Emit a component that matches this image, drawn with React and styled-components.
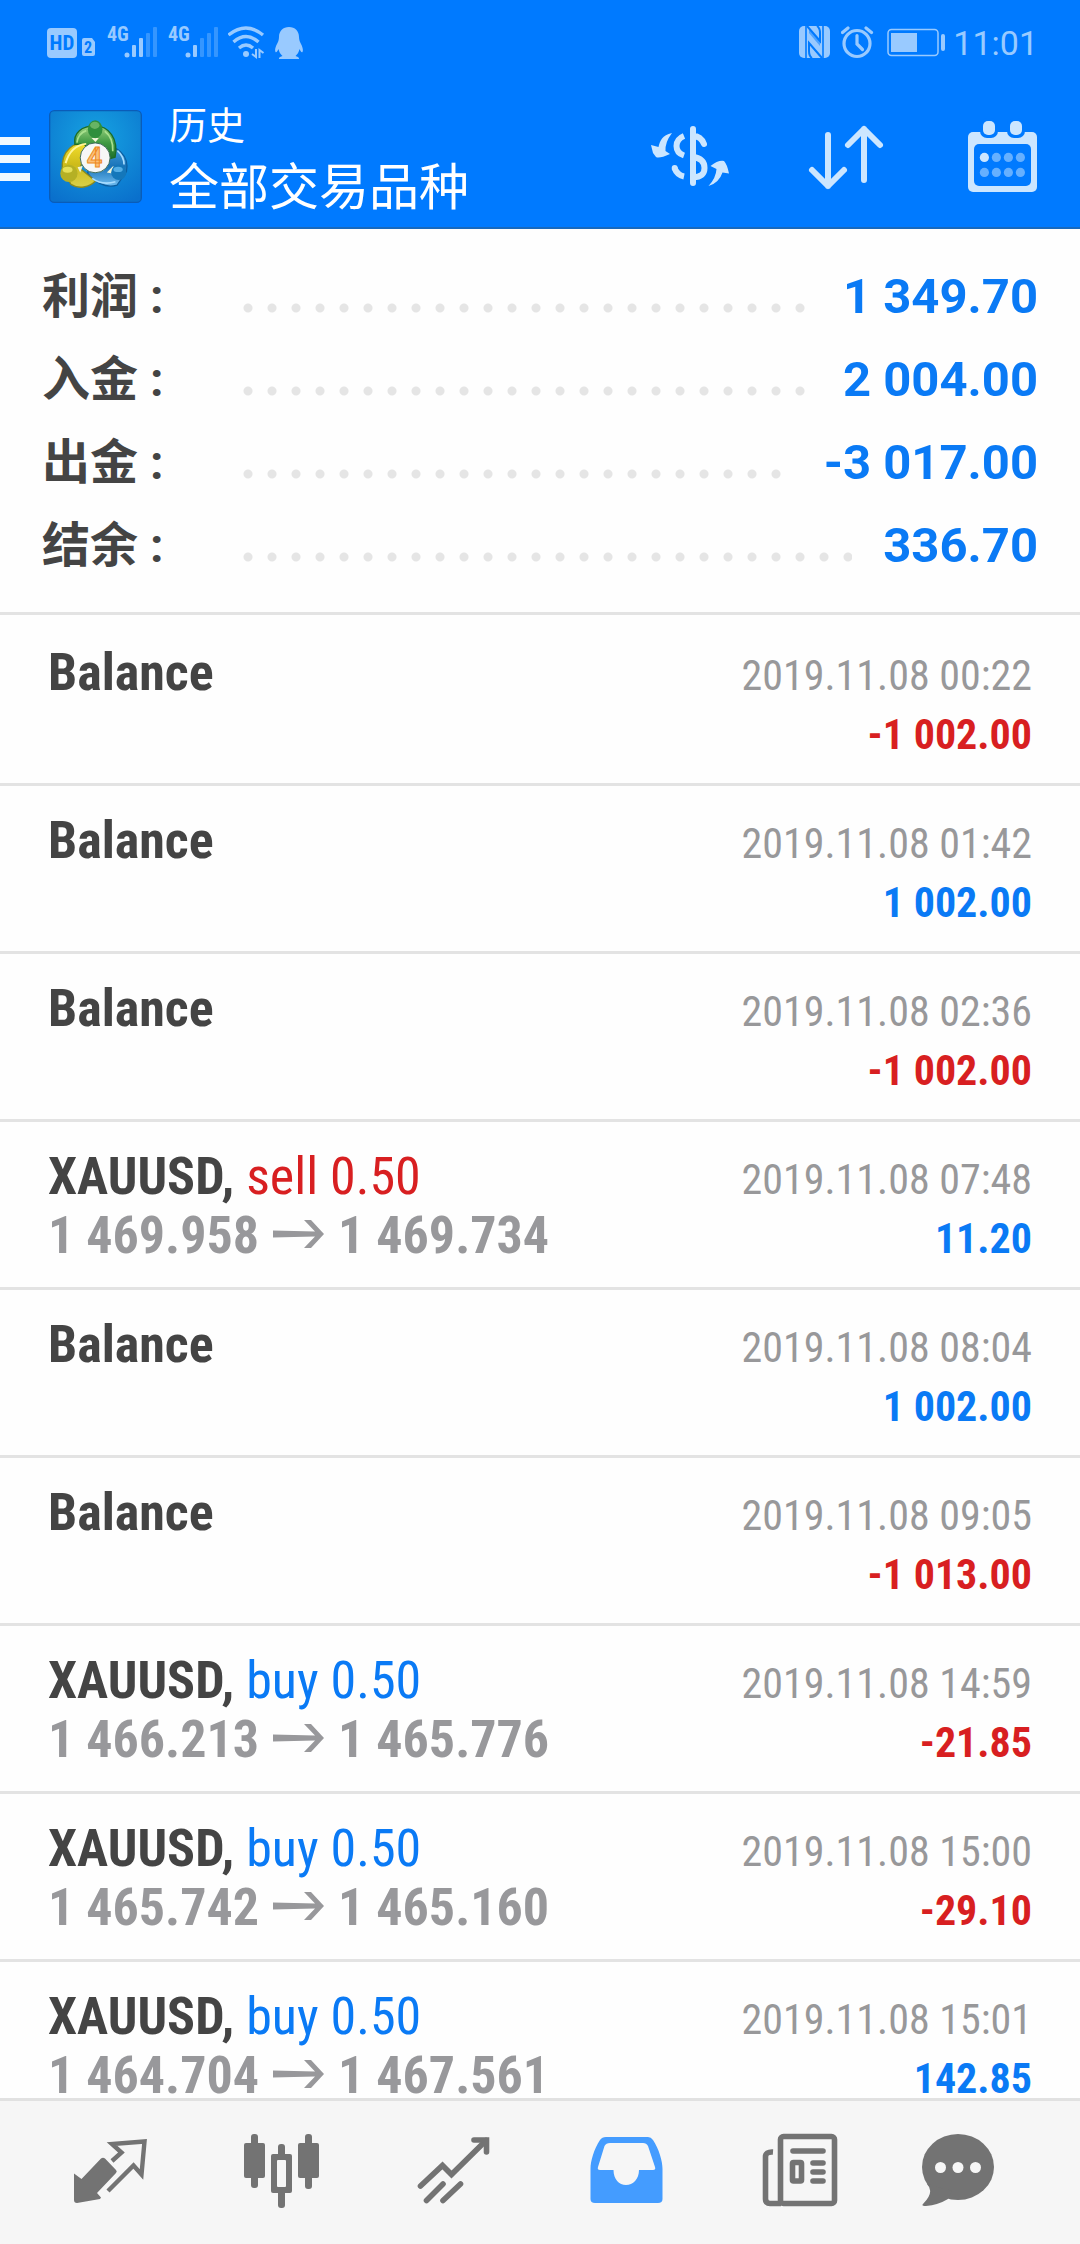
import React from 'react';
import styled, { createGlobalStyle } from 'styled-components';

const summary = [
    { label: '利润 :', value: '1 349.70' },
    { label: '入金 :', value: '2 004.00' },
    { label: '出金 :', value: '-3 017.00' },
    { label: '结余 :', value: '336.70' }
];

const deals = [
    { date: '2019.11.08 00:22', amount: '-1 002.00' },
    { date: '2019.11.08 01:42', amount: '1 002.00' },
    { date: '2019.11.08 02:36', amount: '-1 002.00' },
    { symbol: 'XAUUSD', side: 'sell', volume: '0.50', open: '1 469.958', close: '1 469.734', date: '2019.11.08 07:48', amount: '11.20' },
    { date: '2019.11.08 08:04', amount: '1 002.00' },
    { date: '2019.11.08 09:05', amount: '-1 013.00' },
    { symbol: 'XAUUSD', side: 'buy', volume: '0.50', open: '1 466.213', close: '1 465.776', date: '2019.11.08 14:59', amount: '-21.85' },
    { symbol: 'XAUUSD', side: 'buy', volume: '0.50', open: '1 465.742', close: '1 465.160', date: '2019.11.08 15:00', amount: '-29.10' },
    { symbol: 'XAUUSD', side: 'buy', volume: '0.50', open: '1 464.704', close: '1 467.561', date: '2019.11.08 15:01', amount: '142.85' }
];

export default function App() {
    return (
        <Screen>
            <GlobalStyle />

            <Header>
                <StatusBar />

                <Toolbar>
                    <MenuButton aria-label="菜单">
                        <MenuLine />
                        <MenuLine />
                        <MenuLine />
                    </MenuButton>

                    <Logo />

                    <Titles>
                        <Title>历史</Title>
                        <Subtitle>全部交易品种</Subtitle>
                    </Titles>

                    <ToolButton aria-label="品种"><SymbolIcon /></ToolButton>
                    <ToolButton aria-label="排序"><SortIcon /></ToolButton>
                    <ToolButton aria-label="日期"><CalendarIcon /></ToolButton>
                </Toolbar>
            </Header>

            <Summary>
                {summary.map(item => (
                    <SummaryRow key={item.label}>
                        <SummaryLabel>{item.label}</SummaryLabel>
                        <Leader />
                        <SummaryValue>{item.value}</SummaryValue>
                    </SummaryRow>
                ))}
            </Summary>

            <Deals>
                {deals.map(deal => <Deal key={deal.date} {...deal} />)}
            </Deals>

            <TabBar>
                <Tab aria-label="行情"><QuotesIcon /></Tab>
                <Tab aria-label="图表"><CandlesIcon /></Tab>
                <Tab aria-label="交易"><TradeIcon /></Tab>
                <Tab aria-label="历史" aria-current="page" $active><HistoryIcon /></Tab>
                <Tab aria-label="新闻"><NewsIcon /></Tab>
                <Tab aria-label="消息"><ChatIcon /></Tab>
            </TabBar>
        </Screen>
    );
}

function Deal({ symbol, side, volume, open, close, date, amount }) {
    return (
        <DealItem>
            <Line>
                {symbol
                    ? <Name>{symbol}, <Side $sell={side === 'sell'}>{side} {volume}</Side></Name>
                    : <Name>Balance</Name>}
                <DealDate>{date}</DealDate>
            </Line>

            <Line>
                <Prices>
                    {symbol && <>{open}<Arrow />{close}</>}
                </Prices>
                <Amount $loss={amount.startsWith('-')}>{amount}</Amount>
            </Line>
        </DealItem>
    );
}

function StatusBar() {
    return (
        <Status>
            <StatusGroup>
                <svg width="51" height="36" viewBox="0 0 51 36">
                    <rect y="3" width="30" height="30" rx="4" fill="currentColor" />
                    <SvgText x="15" y="25" textAnchor="middle" $size={21} fill="#007aff">HD</SvgText>
                    <path d="M37 13h8l3 4v12a2 2 0 0 1-2 2h-9a2 2 0 0 1-2-2v-14a2 2 0 0 1 2-2z" fill="currentColor" />
                    <SvgText x="41" y="28" textAnchor="middle" $size={16} fill="#007aff">2</SvgText>
                </svg>
                <Signal level={2} />
                <Signal level={1} />
                <svg width="37" height="36" viewBox="0 0 37 36" fill="none" stroke="currentColor" strokeWidth="3.4">
                    <path d="M0.5 10Q18 -4 35 10M5.500 17Q18 6 30.500 17M11 23Q18 17 25 23" />
                    <circle cx="18" cy="29" r="3" fill="currentColor" stroke="none" />
                    <path d="M28 24v8l-4-3M31.500 33v-8l4 3" strokeWidth="2" />
                </svg>
                <svg width="30" height="36" viewBox="0 0 30 36" fill="currentColor">
                    <path d="M16 2C10 2 6 6 6 12c0 3-1 5-2 7-1.500 3-2.500 6-1.500 8 1 .8 2-1 3-3 .5 3 2 5 4 7-2 .5-4 1.500-3.500 3H26c.5-1.500-1.500-2.500-3.500-3 2-2 3.500-4 4-7 1 2 2 3.800 3 3 1-2 0-5-1.500-8-1-2-2-4-2-7 0-6-4-10-10-10z" />
                </svg>
            </StatusGroup>

            <StatusGroup>
                <svg width="34" height="36" viewBox="0 0 34 36">
                    <rect y="1" width="31" height="32" rx="5" fill="currentColor" />
                    <g fill="none" stroke="#007aff" strokeWidth="1.600">
                        <path d="M7 1V33M24 1V33" />
                        <path d="M8 1L21 16V8Q21 3 18 1M23 33L10 18V26Q10 31 13 33" strokeWidth="2" />
                    </g>
                    <path d="M10 8L21 21V16L10 4z" fill="#007aff" opacity="0.5" />
                </svg>
                <svg width="38" height="36" viewBox="0 0 38 36" fill="none" stroke="currentColor" strokeWidth="3.200">
                    <circle cx="16" cy="18.500" r="13" />
                    <path d="M16 10.500V19l5.500 5.500" strokeLinecap="round" />
                    <path d="M1.500 7.500L7 3M30.500 7.500L25 3" strokeLinecap="round" />
                </svg>
                <svg width="58" height="36" viewBox="0 0 58 36" fill="currentColor">
                    <rect x="1" y="4.500" width="50" height="26" rx="3.500" fill="none" stroke="currentColor" strokeWidth="1.500" />
                    <rect x="4" y="8" width="26" height="19" />
                    <rect x="54" y="9" width="4" height="17" rx="2" />
                </svg>
                <Clock>11:01</Clock>
            </StatusGroup>
        </Status>
    );
}

function Signal({ level }) {
    const bars = [[26, 24], [33, 17], [40, 12], [47, 6]];

    return (
        <svg width="53" height="44" viewBox="0 0 53 44" fill="currentColor">
            <SvgText x="1" y="20" $size={20}>4G</SvgText>
            <circle cx="21" cy="34" r="2.500" />
            {bars.map(([x, y], i) => (
                <rect key={x} x={x} y={y} width="4" height={36 - y} rx="1" opacity={i < level ? 1 : 0.35} />
            ))}
        </svg>
    );
}

function Logo() {
    return (
        <svg width="93" height="93" viewBox="0 0 280 280">
            <defs>
                <radialGradient id="back" cx="0.5" cy="0.3" r="0.8">
                    <stop offset="0" stopColor="#16a3e2" />
                    <stop offset="1" stopColor="#0a70cc" />
                </radialGradient>
                <linearGradient id="green" x1="0" y1="0" x2="0" y2="1">
                    <stop offset="0" stopColor="#9bd180" />
                    <stop offset="0.5" stopColor="#3f9a43" />
                    <stop offset="1" stopColor="#1b6c28" />
                </linearGradient>
                <linearGradient id="yellow" x1="0" y1="0" x2="0" y2="1">
                    <stop offset="0" stopColor="#f5df2c" />
                    <stop offset="0.5" stopColor="#cdbb1a" />
                    <stop offset="1" stopColor="#d9d04a" />
                </linearGradient>
                <linearGradient id="blue" x1="0" y1="0" x2="0" y2="1">
                    <stop offset="0" stopColor="#3f9ddb" />
                    <stop offset="0.5" stopColor="#1a73b8" />
                    <stop offset="1" stopColor="#6fbcf0" />
                </linearGradient>
            </defs>
            <rect x="2" y="2" width="276" height="276" rx="14" fill="url(#back)" stroke="#0a5cb8" strokeWidth="4" />
            <path d="M150 118C205 95 244 142 233 186L205 226C170 238 135 215 116 190z" fill="url(#blue)" stroke="#0b5c9e" strokeWidth="4" />
            <path d="M130 100C75 88 36 125 40 178L66 224C90 240 122 232 140 214L92 175z" fill="url(#yellow)" stroke="#8d8a1e" strokeWidth="4" />
            <path d="M78 104C72 68 100 48 138 48C180 48 210 86 199 142L170 150L104 102z" fill="url(#green)" stroke="#1b6c28" strokeWidth="4" />
            <path d="M112 62Q88 70 84 98M168 64Q194 84 192 124" fill="none" stroke="#a8e08e" strokeWidth="5" />
            <path d="M112 102Q66 106 50 160" fill="none" stroke="#fff59a" strokeWidth="6" />
            <path d="M130 206Q160 228 200 216M206 122Q226 140 226 164" fill="none" stroke="#a7dcff" strokeWidth="5" />
            <path d="M86 172l16-4-8 20zM174 188l20-20v24zM128 84h22l-10 12z" fill="#f2f5d8" />
            <ellipse cx="139" cy="58" rx="22" ry="27" fill="#2f8f3c" />
            <ellipse cx="138" cy="46" rx="14" ry="11" fill="#8ecb7e" opacity="0.6" />
            <circle cx="60" cy="191" r="26" fill="#b5b024" />
            <ellipse cx="56" cy="180" rx="15" ry="9" fill="#f3ec66" opacity="0.8" />
            <circle cx="210" cy="188" r="23" fill="#1477ba" />
            <ellipse cx="208" cy="179" rx="14" ry="8" fill="#63baf0" opacity="0.8" />
            <circle cx="139" cy="144" r="45" fill="#f7f7f7" stroke="#3f6c5a" strokeWidth="3" />
            <text x="137" y="173" textAnchor="middle" fill="#fbc078" stroke="#ee8a22" strokeWidth="3" fontFamily="Roboto, sans-serif" fontWeight="700" fontSize="82">4</text>
        </svg>
    );
}

function SymbolIcon() {
    return (
        <svg width="96" height="96" viewBox="0 0 96 96" fill="none" stroke="currentColor" strokeWidth="6">
            <path d="M51 20V74M62 35Q59 27 51 27" strokeLinecap="round" />
            <path d="M42 27Q34.500 30 34.500 37T42 46.500M51 48C59 49 62.500 53 62.500 59S59 68 51 68.500M32.500 59Q35 66 42 67.500" />
            <circle cx="32.700" cy="59" r="3" fill="currentColor" stroke="none" />
            <path d="M30 24C20 26 18 32 16.500 38L9 36 11 44 14 48Q17 50 28 45L23.500 42Q23 33 30 24zM66.500 77Q74 69 74.500 60L68.500 57Q76 51 82 52 85 55 87 64.500L80.500 63.500Q77 74 66.500 77z" fill="currentColor" stroke="none" />
        </svg>
    );
}

function SortIcon() {
    return (
        <svg width="96" height="96" viewBox="0 0 96 96" fill="none" stroke="currentColor" strokeWidth="6" strokeLinecap="round" strokeLinejoin="round">
            <path d="M30 26V77M14 61L30 77 46 61M66 71V20M50 36L66 20 82 36" />
        </svg>
    );
}

function CalendarIcon() {
    const dots = [30, 42, 54, 66];

    return (
        <svg width="96" height="96" viewBox="0 0 96 96" fill="currentColor">
            <rect x="14" y="23" width="69" height="60" rx="5" />
            <g fill="#007aff">
                <rect x="20" y="35" width="57" height="42" rx="5" />
                <rect x="26" y="9" width="18" height="20" rx="7" />
                <rect x="53" y="9" width="18" height="20" rx="7" />
            </g>
            <rect x="29" y="12" width="12" height="14" rx="5" />
            <rect x="56" y="12" width="12" height="14" rx="5" />
            {dots.map((x, i) => (
                <g key={x}>
                    <circle cx={x + 0.4} cy="48.400" r="4.600" opacity={i ? 0.5 : 1} />
                    <circle cx={x + 0.4} cy="63.400" r="4.600" opacity="0.5" />
                </g>
            ))}
        </svg>
    );
}

function Arrow() {
    return (
        <ArrowSvg width="51" height="28" viewBox="0 0 51 28" aria-label="→">
            <path d="M0 10.500L42 11.500 31 0H38L51 14 38 28H31L42 16.500 0 17.500z" fill="currentColor" />
        </ArrowSvg>
    );
}

function QuotesIcon() {
    return (
        <svg width="96" height="96" viewBox="0 0 96 96" fill="currentColor">
            <path d="M12 48.500L19.500 54 39 33.500Q41 32 43 33.500L54 45Q55.500 46.500 54 48L35 68 39 72.500 38 74 15 78Q12 78 12 75z" />
            <path d="M50 36L59.500 27.500 50 19 82.500 16.500 79.500 49.500 71.500 40.500 46 66" fill="none" stroke="currentColor" strokeWidth="4.400" />
        </svg>
    );
}

function CandlesIcon() {
    return (
        <svg width="96" height="96" viewBox="0 0 96 96" fill="currentColor">
            <rect x="17" y="9" width="7" height="54" rx="3" />
            <rect x="10" y="18" width="21" height="35" rx="2" />
            <rect x="44" y="19" width="7" height="64" rx="3" />
            <rect x="37" y="29" width="21" height="39" rx="2" />
            <rect x="43" y="35" width="9" height="27" rx="1" fill="#f6f6f6" />
            <rect x="71" y="9" width="7" height="55" rx="3" />
            <rect x="64" y="18" width="21" height="35" rx="2" />
        </svg>
    );
}

function TradeIcon() {
    return (
        <svg width="96" height="96" viewBox="0 0 96 96" fill="none" stroke="currentColor" strokeWidth="5.600" strokeLinecap="round">
            <path d="M14.500 61L36.500 40.500 45.500 49.500 80 15.500" />
            <path d="M68 15H80.500V27" />
            <path d="M20.500 75.500L37 59M37 75.500L54.500 59" />
        </svg>
    );
}

function HistoryIcon() {
    return (
        <svg width="96" height="96" viewBox="0 0 96 96" fill="currentColor" fillRule="evenodd">
            <path d="M28 12H70Q73 12 75 15C81 24 84.500 36 84.500 44V74Q84.500 78 80 78H17Q12.500 78 12.500 74V44C12.500 36 16 24 22 15Q24 12 28 12zM32 18Q28 18 26.500 21L20 42Q19 45 22 45H35.500C35.500 54 41 60 48 60S61 54 61 45H75Q78 45 77 42L70 21Q68.500 18 65 18z" />
        </svg>
    );
}

function NewsIcon() {
    return (
        <svg width="96" height="96" viewBox="0 0 96 96" fill="none" stroke="currentColor" strokeWidth="5.600">
            <rect x="30.500" y="11.500" width="54" height="67" rx="3" />
            <path d="M23 27Q15.500 26.500 15.500 32V74Q15.500 78.500 20 78.500H31" />
            <path d="M43 26H73M63 38H73M63 47H73M63 56H73" strokeLinecap="round" />
            <rect x="42.500" y="37.500" width="9" height="18.500" rx="1" />
        </svg>
    );
}

function ChatIcon() {
    return (
        <svg width="96" height="96" viewBox="0 0 96 96" fill="currentColor">
            <ellipse cx="36" cy="42" rx="36" ry="33" />
            <path d="M5 59Q13 67 1 79Q-1 81 4 81Q16 80 26 74L30 66z" />
            <g fill="#f6f6f6">
                <circle cx="18.500" cy="42.500" r="5.500" />
                <circle cx="36" cy="42.500" r="5.500" />
                <circle cx="53.500" cy="42.500" r="5.500" />
            </g>
        </svg>
    );
}

const GlobalStyle = createGlobalStyle`
    * {
        box-sizing: border-box;
    }

    body {
        margin: 0;

        font-family: Roboto, "Noto Sans CJK SC", sans-serif;
    }

    button {
        padding: 0;

        border: 0;

        background: none;

        font: inherit;
    }
`;

const Screen = styled.div`
    display: flex;

    flex-direction: column;

    height: 100vh;

    background-color: #FEFEFE;

    color: #444444;
`;

const Header = styled.header`
    flex-shrink: 0;

    border-bottom: 2px solid #1769BE;

    background-color: #007AFF;

    color: #CCE6FF;
`;

const Status = styled.div`
    display: flex;

    justify-content: space-between;

    height: 84px;

    padding: 2px 42px 0 47px;

    color: #99CAFF;
`;

const StatusGroup = styled.div`
    display: flex;

    align-items: center;

    gap: 8px;
`;

const SvgText = styled.text`
    font-family: "Roboto Condensed", Roboto, sans-serif;

    font-size: ${props => props.$size}px;

    font-weight: 700;
`;

const Clock = styled.time`
    font-size: 34px;

    line-height: 36px;
`;

const Toolbar = styled.div`
    display: flex;

    align-items: center;

    height: 143px;

    padding-top: 2px;
`;

const MenuButton = styled.button`
    display: flex;

    flex-direction: column;

    gap: 10px;

    width: 30px;

    margin-right: 19px;

    padding-top: 4px;
`;

const MenuLine = styled.span`
    height: 8px;

    background-color: #F0F8FF;
`;

const Titles = styled.div`
    flex-grow: 1;

    margin-left: 27px;

    padding-top: 4px;

    color: #FFFFFF;
`;

const Title = styled.div`
    font-size: 38px;

    line-height: 58px;
`;

const Subtitle = styled.h1`
    margin: 0;

    font-size: 50px;

    font-weight: 400;

    line-height: 66px;
`;

const ToolButton = styled.button`
    display: flex;

    align-items: center;

    justify-content: center;

    width: 156px;

    height: 100%;

    color: inherit;
`;

const Summary = styled.dl`
    flex-shrink: 0;

    margin: 0;

    padding: 26px 42px 25px;

    border-bottom: 3px solid #E3E3E3;
`;

const SummaryRow = styled.div`
    display: flex;

    font-size: 48px;

    font-weight: 700;

    line-height: 83px;
`;

const SummaryLabel = styled.dt`
    width: 194px;
`;

const Leader = styled.span`
    flex-grow: 1;

    height: 24px;

    margin: 41px 31px 0 0;

    background: radial-gradient(circle, #E5E5E5 4px, transparent 5px) 0 0 / 24px 24px repeat-x;
`;

const SummaryValue = styled.dd`
    margin: 0;

    color: #0A7AF5;

    font-size: 49px;
`;

const Deals = styled.ul`
    flex: 1 1 0;

    min-height: 0;

    margin: 0;

    padding: 3px 0 0;

    overflow: hidden;

    font-family: "Roboto Condensed", Roboto, sans-serif;

    list-style: none;
`;

const DealItem = styled.li`
    height: 168px;

    padding: 25px 48px 0;

    border-bottom: 3px solid #E3E3E3;
`;

const Line = styled.div`
    display: flex;

    align-items: baseline;

    justify-content: space-between;

    height: 59px;

    line-height: 59px;

    white-space: nowrap;
`;

const Name = styled.span`
    font-size: 52px;

    font-weight: 700;
`;

const Side = styled.span`
    color: ${props => props.$sell ? '#D81F21' : '#0A7AF5'};

    font-weight: 400;
`;

const DealDate = styled.time`
    color: #98989A;

    font-size: 42px;
`;

/* the zero-width space keeps the baseline when a row has no prices */
const Prices = styled.span`
    color: #98989B;

    font-size: 52px;

    font-weight: 700;

    &::before {
        content: '\\200b';
    }
`;

const ArrowSvg = styled.svg`
    margin: 0 14px 5px;
`;

const Amount = styled.span`
    color: ${props => props.$loss ? '#D81F21' : '#0A7AF5'};

    font-size: 42px;

    font-weight: 700;
`;

const TabBar = styled.nav`
    display: grid;

    flex-shrink: 0;

    grid-template-columns: repeat(6, 1fr);

    height: 146px;

    padding: 0 24px;

    border-top: 3px solid #E1E1E1;

    background-color: #F6F6F6;
`;

const Tab = styled.button`
    display: flex;

    align-items: center;

    justify-content: center;

    color: ${props => props.$active ? '#449CFF' : '#737373'};
`;
